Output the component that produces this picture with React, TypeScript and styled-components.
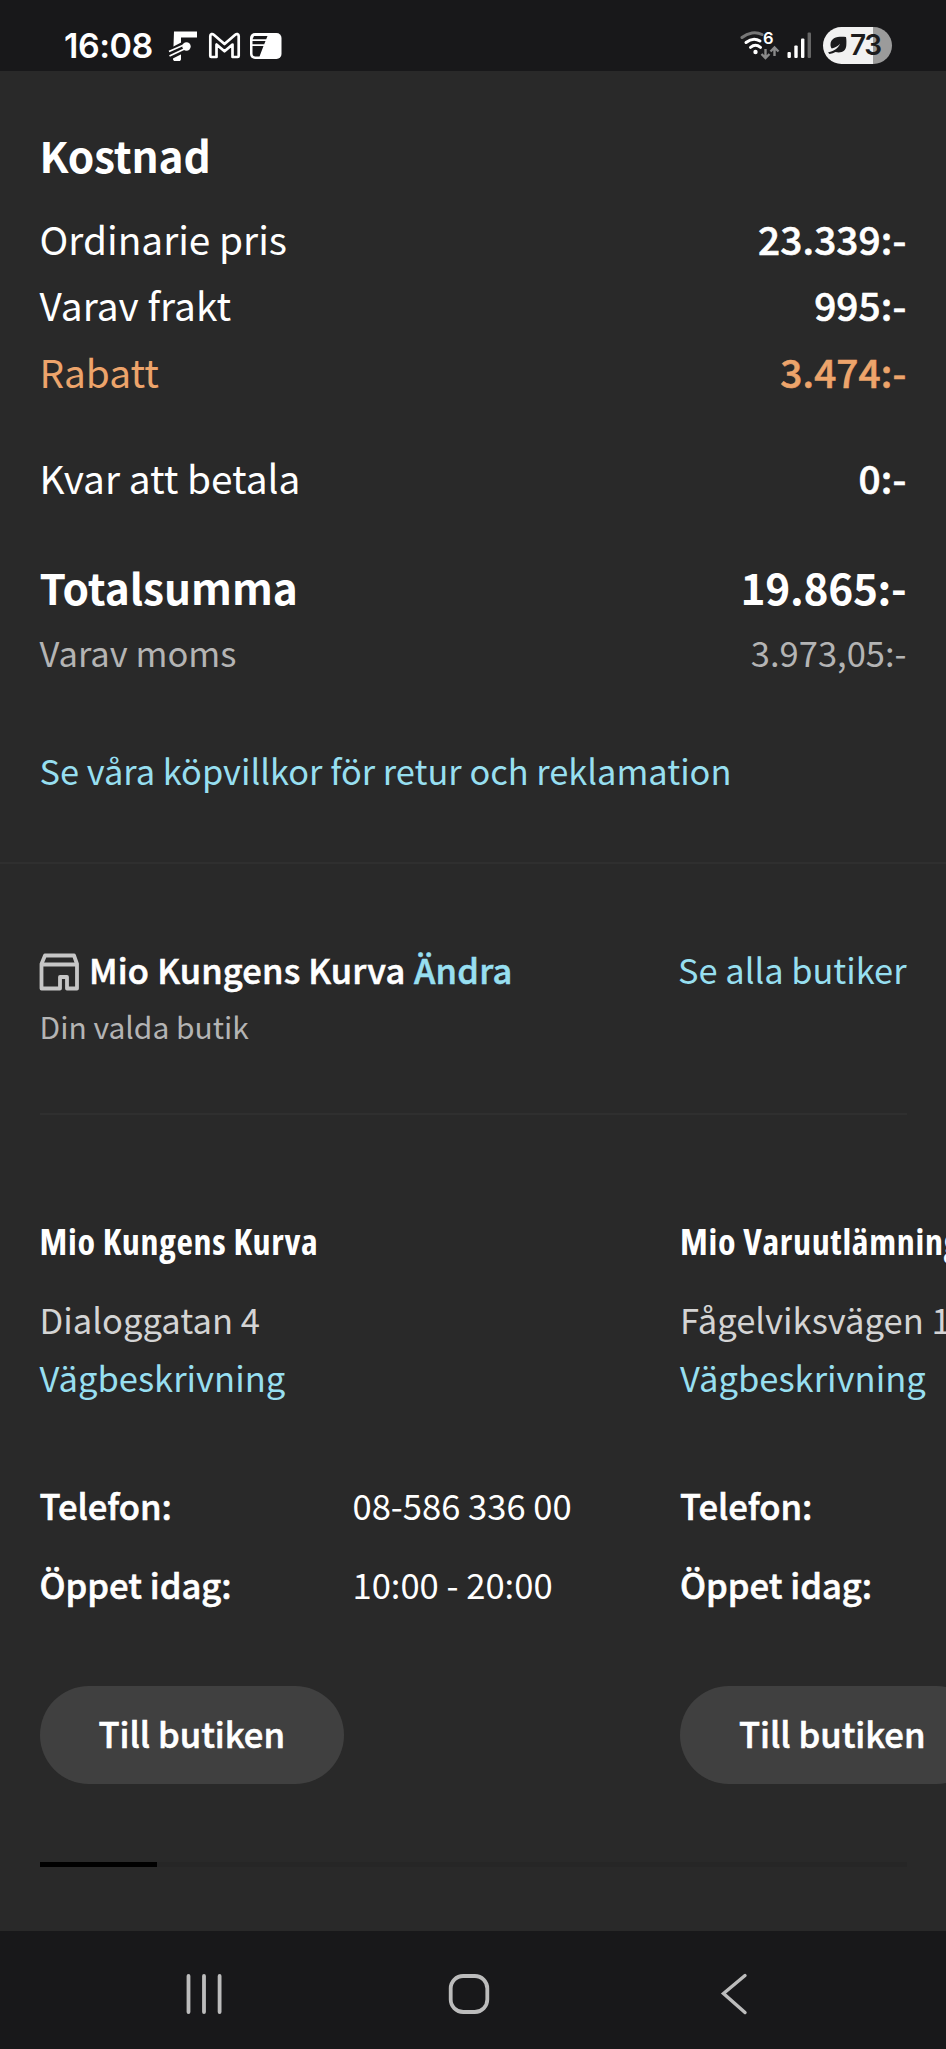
import React from "react";
import styled, { createGlobalStyle, css } from "styled-components";

const GlobalStyle = createGlobalStyle`
  *, *::before, *::after { box-sizing: border-box; }
  html, body { margin: 0; padding: 0; background: #292929; }
  body { overflow: hidden; }
`;

const sans = `"Noto Sans CJK SC", "Open Sans", sans-serif`;

const semibold = css`
  font-weight: 500;
  -webkit-text-stroke: 0.6px currentColor;
`;

const Screen = styled.div`
  width: 946px;
  height: 2049px;
  display: flex;
  flex-direction: column;
  overflow: hidden;
  background: #292929;
  color: #fff;
  font-family: ${sans};
  font-size: 34.4px;
  white-space: nowrap;
`;

/* ---------- status bar ---------- */

const StatusBar = styled.header`
  flex: none;
  height: 71px;
  padding: 20px 54px 0 64px;
  display: flex;
  justify-content: space-between;
  background: #18181a;
  font-family: Inter, Roboto, sans-serif;
`;

const StatusGroup = styled.div`
  display: flex;
  align-items: flex-start;
`;

const Clock = styled.span`
  width: 103px;
  padding-top: 5px;
  font-size: 34px;
  line-height: 42px;
  font-weight: 600;
  letter-spacing: -0.5px;
`;

const Battery = styled.div`
  width: 69px;
  height: 37px;
  margin: 7px 0 0 10px;
  padding-left: 5px;
  display: flex;
  align-items: center;
  border-radius: 19px;
  color: #1b1b1d;
  background: linear-gradient(90deg, #f1f1f1 50px, #9b9b9b 50px);
  font-size: 28px;
  line-height: 37px;
  font-weight: 600;
  letter-spacing: -1.5px;
`;

/* ---------- cost summary ---------- */

const CostSection = styled.section`
  padding: 59px 39.5px 62px;
  border-bottom: 2px solid #2f2f2f;
`;

const Title = styled.h2`
  margin: 0 0 25px;
  font-size: 42.4px;
  line-height: 50px;
  font-weight: 700;
  letter-spacing: -0.15px;
`;

type Tone = "normal" | "discount" | "total" | "muted";

const CostRow = styled.div<{ $tone?: Tone; $gap?: number }>`
  display: flex;
  justify-content: space-between;
  margin-top: ${(p) => p.$gap ?? 0}px;
  font-size: 38.8px;
  line-height: 66.4px;
  ${(p) => p.$tone === "discount" && css`color: #eda46b;`}
  ${(p) =>
    p.$tone === "total" &&
    css`
      font-size: 42.4px;
      line-height: 66px;
      font-weight: 700;
    `}
  ${(p) =>
    p.$tone === "muted" &&
    css`
      color: #b4b4b4;
      font-size: 34.5px;
      line-height: 60px;
    `}
`;

const Amount = styled.span<{ $tone?: Tone }>`
  ${(p) => p.$tone !== "muted" && p.$tone !== "total" && css`
    ${semibold}
    letter-spacing: 0.12px;
  `}
  ${(p) => p.$tone === "total" && css`letter-spacing: -0.3px;`}
`;

const TextLink = styled.a`
  color: #97dff0;
  text-decoration: none;
`;

const TermsLink = styled(TextLink)`
  display: block;
  margin-top: 58px;
  line-height: 60px;
`;

/* ---------- selected store ---------- */

const StoreSection = styled.section`
  flex: 1;
  padding: 80px 39.5px 0;
`;

const StoreHeader = styled.div`
  display: flex;
  justify-content: space-between;
  line-height: 50px;
`;

const StoreTitle = styled.div`
  display: flex;
  gap: 8.5px;
  letter-spacing: 0.2px;
  ${semibold}
  svg { margin: 9px 0 0 -1px; }
`;

const StoreNote = styled.p`
  margin: 7px 0 62px;
  color: #b4b4b4;
  font-size: 30px;
  line-height: 50px;
`;

const Rule = styled.hr`
  height: 2px;
  margin: 0;
  border: 0;
  background: #2f2f2f;
`;

const Carousel = styled.div`
  display: flex;
  gap: 48px;
  padding-top: 101px;
  font-size: 34.55px;
`;

const StoreCard = styled.article`
  flex: none;
  width: 592.5px;
`;

const CardTitle = styled.h3`
  margin: 0 0 24px;
  font-family: "Open Sans", sans-serif;
  font-size: 36px;
  font-stretch: 75%;
  font-weight: 700;
  line-height: 51px;
  height: 50px;
  letter-spacing: 0.67px;
`;

const CardLine = styled.div`
  color: #d4d4d4;
  line-height: 58.3px;
`;

const Details = styled.dl`
  display: grid;
  grid-template-columns: 313px auto;
  margin: 60px 0 62px;
  line-height: 79px;
`;

const Term = styled.dt`
  ${semibold}
`;

const Value = styled.dd`
  margin: 0;
`;

const StoreButton = styled.button`
  display: flex;
  align-items: flex-start;
  justify-content: center;
  width: 304.5px;
  height: 98px;
  padding: 0;
  border: 0;
  border-radius: 49px;
  background: #404040;
  color: #fff;
  font-family: inherit;
  font-size: 34.6px;
  line-height: 95px;
  ${semibold}
`;

const Track = styled.div`
  margin-top: 78px;
  height: 5px;
  background: #262626;
`;

const Thumb = styled.div`
  width: 117px;
  height: 5px;
  background: #000;
`;

/* ---------- navigation bar ---------- */

const NavBar = styled.nav`
  flex: none;
  height: 118px;
  padding: 39px 0 0 183px;
  display: flex;
  background: #18181a;
  color: #bcbcbc;
`;

const NavKey = styled.span<{ $offset?: number }>`
  margin-left: ${(p) => p.$offset ?? 0}px;
  svg { display: block; }
`;

function RouteIcon() {
  return (
    <svg width="34" height="42" viewBox="167 20 34 42">
      <path d="M174 31.5h23v6h-16v22l-1 1.500h-6l-1-1.500z" fill="#fff" />
      <path d="M168 52.500 185 44M169 57l18-9" stroke="#18181a" strokeWidth="6" />
      <path d="M169 51.500 186 44M169.500 56l17-8" stroke="#fff" strokeWidth="1.800" />
      <circle cx="186.500" cy="46.500" r="4.200" fill="#fff" />
    </svg>
  );
}

function MailIcon() {
  return (
    <svg width="48" height="42" viewBox="201 20 48 42">
      <path
        d="M210.300 56V36c0-2 2-2.500 3.500-1.300L224.500 44l10.700-9.300c1.500-1.200 3.500-.700 3.500 1.300v20c0 .700-.400 1-1 1h-5.200V44.500l-8 6.800-8-6.800V57h-5.200c-.600 0-1-.300-1-1z"
        fill="none"
        stroke="#fff"
        strokeWidth="2.700"
        strokeLinejoin="round"
      />
    </svg>
  );
}

function CardIcon() {
  return (
    <svg width="34" height="42" viewBox="249 20 34 42">
      <rect x="250" y="33" width="31.500" height="26" rx="5" fill="#fff" />
      <path d="M254 36h13.500l-1.300 3.300H252.500zM252.500 41h13l-1.300 3.300h-11.700zM252.500 46h11l-4 10.500h-4c-2 0-3-1-3-3z" fill="#18181a" />
    </svg>
  );
}

function WifiIcon() {
  return (
    <svg width="42" height="42" viewBox="739 20 42 42">
      <g fill="none" strokeLinecap="round">
        <path d="M742 37.500c6-5 14-6 20-3" stroke="#777" strokeWidth="3" />
        <path d="M746 42.500c5-4 10-4 14-1.500" stroke="#fff" strokeWidth="3" />
        <path d="M750.500 47.300c3-2.400 7-2.400 10 0" stroke="#fff" strokeWidth="3" />
      </g>
      <circle cx="755.500" cy="52" r="2.200" fill="#fff" />
      <path d="M765.500 49v8M761.500 54l4 4 4-4M774.500 56v-8M770.500 51.500l4-4 4 4" fill="none" stroke="#8a8a8a" strokeWidth="2.400" />
      <text x="763" y="44" fill="#fff" fontSize="16.500" fontWeight="600">
        6
      </text>
    </svg>
  );
}

function SignalIcon() {
  return (
    <svg width="32" height="42" viewBox="781 20 32 42" fill="#fff">
      <rect x="787.500" y="52" width="3.400" height="6" rx="1" />
      <rect x="794.300" y="45.500" width="3.400" height="12.500" rx="1" />
      <rect x="801" y="38.500" width="3.400" height="19.500" rx="1" />
      <rect x="807.600" y="32.500" width="3.400" height="25.500" rx="1" fill="#666" />
    </svg>
  );
}

function LeafIcon() {
  return (
    <svg width="22" height="20" viewBox="0 0 22 20">
      <path d="M18 1C11 .2 2.500 1 2.500 8.500c0 1.600.4 3 1.300 4 3.200-.6 6.200-2.200 8.200-4.700-1.500 4-5 7.200-12 8.700L1.500 18c2.300-.3 4.300-1 6-2 5.800 1.500 10.500-1 10.800-6.500.2-3 .2-6-.3-8.500z" fill="#1b1b1d" />
    </svg>
  );
}

function StoreIcon() {
  return (
    <svg width="42" height="38" viewBox="0 0 42 38" fill="none" stroke="#c6c6c6" strokeWidth="3.800" strokeLinejoin="round">
      <path d="M6 2.500h29l3 8.500v24.500H28V24h-7v11.500H2.500V11z" />
      <path d="M3 11.500h35" />
    </svg>
  );
}

const stores = [
  { name: "Mio Kungens Kurva", address: "Dialoggatan 4", phone: "08-586 336 00", hours: "10:00 - 20:00" },
  { name: "Mio Varuutlämning", address: "Fågelviksvägen 1", phone: "", hours: "" },
];

export default function App() {
  return (
    <Screen>
      <GlobalStyle />
      <StatusBar>
        <StatusGroup>
          <Clock>16:08</Clock>
          <RouteIcon />
          <MailIcon />
          <CardIcon />
        </StatusGroup>
        <StatusGroup>
          <WifiIcon />
          <SignalIcon />
          <Battery>
            <LeafIcon />
            73
          </Battery>
        </StatusGroup>
      </StatusBar>

      <CostSection>
        <Title>Kostnad</Title>
        <CostRow>
          <span>Ordinarie pris</span>
          <Amount>23.339:-</Amount>
        </CostRow>
        <CostRow>
          <span>Varav frakt</span>
          <Amount>995:-</Amount>
        </CostRow>
        <CostRow $tone="discount">
          <span>Rabatt</span>
          <Amount>3.474:-</Amount>
        </CostRow>
        <CostRow $gap={40}>
          <span>Kvar att betala</span>
          <Amount>0:-</Amount>
        </CostRow>
        <CostRow $tone="total" $gap={43}>
          <span>Totalsumma</span>
          <Amount $tone="total">19.865:-</Amount>
        </CostRow>
        <CostRow $tone="muted" $gap={2}>
          <span>Varav moms</span>
          <Amount $tone="muted">3.973,05:-</Amount>
        </CostRow>
        <TermsLink>Se våra köpvillkor för retur och reklamation</TermsLink>
      </CostSection>

      <StoreSection>
        <StoreHeader>
          <StoreTitle>
            <StoreIcon />
            <span>Mio Kungens Kurva</span>
            <TextLink>Ändra</TextLink>
          </StoreTitle>
          <TextLink>Se alla butiker</TextLink>
        </StoreHeader>
        <StoreNote>Din valda butik</StoreNote>
        <Rule />
        <Carousel>
          {stores.map((store) => (
            <StoreCard key={store.name}>
              <CardTitle>{store.name}</CardTitle>
              <CardLine>{store.address}</CardLine>
              <CardLine>
                <TextLink>Vägbeskrivning</TextLink>
              </CardLine>
              <Details>
                <Term>Telefon:</Term>
                <Value>{store.phone}</Value>
                <Term>Öppet idag:</Term>
                <Value>{store.hours}</Value>
              </Details>
              <StoreButton>Till butiken</StoreButton>
            </StoreCard>
          ))}
        </Carousel>
        <Track>
          <Thumb />
        </Track>
      </StoreSection>

      <NavBar>
        <NavKey>
          <svg width="42" height="48" viewBox="183 1970 42 48" stroke="currentColor" strokeWidth="3.800" strokeLinecap="round">
            <path d="M188.500 1976v36M204 1976v36M219.600 1976v36" />
          </svg>
        </NavKey>
        <NavKey $offset={221.500}>
          <svg width="44" height="48" viewBox="447 1970 44 48" fill="none" stroke="currentColor" strokeWidth="3.800">
            <rect x="450.700" y="1976" width="36.600" height="36" rx="12.500" />
          </svg>
        </NavKey>
        <NavKey $offset={228}>
          <svg width="30" height="48" viewBox="719 1970 30 48" fill="none" stroke="currentColor" strokeWidth="3.400" strokeLinecap="round">
            <path d="M745 1975.500 723.500 1993.500 745 2012.500" />
          </svg>
        </NavKey>
      </NavBar>
    </Screen>
  );
}
